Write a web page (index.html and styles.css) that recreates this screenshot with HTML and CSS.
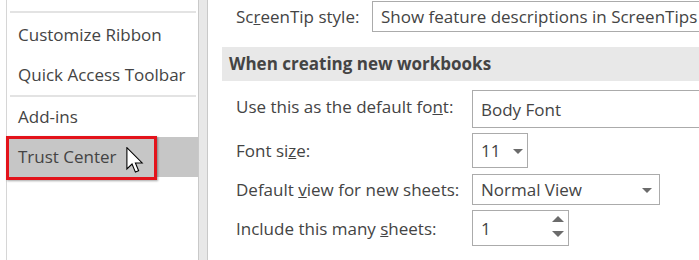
FILE: index.html
```html
<!DOCTYPE html>
<html>
<head>
<meta charset="utf-8">
<link rel="stylesheet" href="styles.css">
</head>
<body>
<div class="app">
  <nav class="nav">
    <div class="sep"></div>
    <div class="item">Customize Ribbon</div>
    <div class="item">Quick Access Toolbar</div>
    <div class="sep"></div>
    <div class="item">Add-ins</div>
    <div class="item selected">Trust Center</div>
    <div class="mark"></div>
    <svg class="cursor" width="18" height="27" viewBox="0 0 13 20" aria-hidden="true">
      <path d="M0.5 0.5 V16.2 L4.3 12.6 L6.8 18.6 L9.2 17.6 L6.8 11.8 H11.8 Z" fill="#fff" stroke="#000" stroke-width="0.8" stroke-linejoin="miter"/>
    </svg>
  </nav>
  <div class="gutter"></div>
  <main class="main">
    <div class="tip-row">
      <span class="tip-label">Sc<u>r</u>eenTip style:</span>
      <div class="box tip-box">Show feature descriptions in ScreenTips</div>
    </div>
    <div class="heading">When creating new workbooks</div>
    <div class="form">
      <span class="label first">Use this as the default fo<u>n</u>t:</span>
      <div class="box font-box">Body Font</div>

      <span class="label">Font si<u>z</u>e:</span>
      <div class="box size-box">11<span class="caret"></span></div>

      <span class="label">Default <u>v</u>iew for new sheets:</span>
      <div class="box view-box">Normal View<span class="caret"></span></div>

      <span class="label">Include this many <u>s</u>heets:</span>
      <div class="box spin-box">1<span class="spin"><span class="up"></span><span class="down"></span></span></div>
    </div>
  </main>
</div>
</body>
</html>
```

FILE: styles.css
```css
* { box-sizing: border-box; }
html, body {
  margin: 0;
  padding: 0;
  background: #fff;
  overflow: hidden;
}
body {
  font-family: "Open Sans", "Noto Sans", sans-serif;
  font-size: 17px;
  color: #444;
}
.app {
  display: flex;
  width: 699px;
  height: 260px;
  overflow: hidden;
}
.nav {
  position: relative;
  margin-left: 6px;
  width: 193px;
  flex: none;
  border-left: 1px solid #d6d6d6;
  border-right: 1px solid #c9c9c9;
  padding-top: 11px;
}
.sep {
  height: 2px;
  margin: 0 2px 0 3px;
  background: #e3e3e3;
}
.nav .sep:first-child { margin-bottom: 2px; }
.item {
  height: 40px;
  line-height: 40px;
  padding-left: 11px;
  white-space: nowrap;
}
.item.selected {
  background: #c6c6c6;
}
.mark {
  position: absolute;
  left: -1px;
  top: 136px;
  width: 151px;
  height: 44px;
  border: 3px solid #e3131b;
  box-shadow: 1px 1px 2px rgba(0,0,0,0.35);
}
.cursor {
  position: absolute;
  left: 119px;
  top: 147px;
}
.gutter {
  width: 9px;
  flex: none;
  background: #e8e8e8;
  border-right: 1px solid #c9c9c9;
}
.main {
  flex: 1;
  min-width: 0;
  padding-left: 14px;
  overflow: hidden;
}
.tip-row {
  display: flex;
  align-items: center;
  margin-top: 1px;
  height: 31px;
}
.tip-label {
  width: 150px;
  flex: none;
  padding-left: 14px;
  white-space: nowrap;
}
.box {
  border: 1px solid #ababab;
  background: #fff;
  display: flex;
  align-items: center;
  padding-left: 8px;
  white-space: nowrap;
  position: relative;
}
.tip-box {
  flex: none;
  width: 400px;
  height: 31px;
}
.heading {
  margin-top: 15px;
  height: 34px;
  line-height: 34px;
  background: #e8e8e8;
  padding-left: 7px;
  font-weight: bold;
  white-space: nowrap;
}
.form {
  display: grid;
  grid-template-columns: 250px 1fr;
  align-items: center;
  row-gap: 5px;
  margin-top: 9px;
}
.label {
  padding-left: 14px;
  white-space: nowrap;
}
.label.first { margin-top: -5px; }
.font-box { height: 38px; width: 300px; }
.size-box { height: 35px; width: 56px; }
.view-box { height: 31px; width: 188px; margin-top: 1px; }
.spin-box { height: 36px; width: 97px; }
.caret {
  position: absolute;
  top: 50%;
  margin-top: -2px;
  width: 0;
  height: 0;
  border-left: 5px solid transparent;
  border-right: 5px solid transparent;
  border-top: 5px solid #6b6b6b;
}
.size-box .caret { left: 40px; }
.view-box .caret { right: 7px; }
.spin {
  position: absolute;
  right: 4px;
  top: 5px;
  bottom: 8px;
  display: flex;
  flex-direction: column;
  justify-content: space-between;
}
.spin .up {
  width: 0; height: 0;
  border-left: 6px solid transparent;
  border-right: 6px solid transparent;
  border-bottom: 6px solid #6b6b6b;
}
.spin .down {
  width: 0; height: 0;
  border-left: 6px solid transparent;
  border-right: 6px solid transparent;
  border-top: 6px solid #6b6b6b;
}
```
